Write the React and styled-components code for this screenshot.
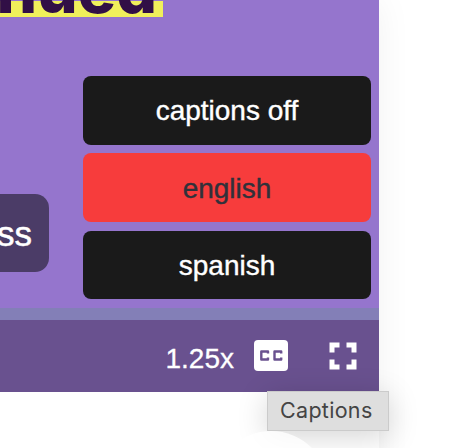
import React from 'react';
import styled, { createGlobalStyle } from 'styled-components';

const GlobalStyle = createGlobalStyle`
  * {
    box-sizing: border-box;
  }

  body {
    margin: 0;
    background: #fff;
    font-family: "Liberation Sans", Arial, sans-serif;
  }
`;

const Page = styled.div`
  position: relative;
  width: 466px;
  height: 448px;
  overflow: hidden;
`;

const Card = styled.div`
  width: 379px;
  height: 600px;
  background: #fff;
  box-shadow: 0 0 34px rgba(0, 0, 0, 0.06);
`;

const Player = styled.div`
  display: flex;
  flex-direction: column;
  height: 392px;
  overflow: hidden;
  background: #9575cd;
`;

const Title = styled.h1`
  width: 163px;
  height: 17px;
  margin: 0;
  padding: 0 6px 0 0;
  display: flex;
  align-items: flex-end;
  justify-content: flex-end;
  background: linear-gradient(#9575cd 1px, #f0f05b 1px);
  color: #310f46;
  font-family: Inter, sans-serif;
  font-size: 64px;
  font-weight: 800;
  line-height: 55px;
`;

const Stage = styled.div`
  flex: 1;
  display: flex;
  justify-content: space-between;
  padding: 59px 8px 0 0;
`;

const Subtitle = styled.div`
  display: flex;
  align-items: center;
  justify-content: flex-end;
  width: 49px;
  height: 78px;
  margin-top: 118px;
  padding: 2px 17px 0 0;
  border-radius: 0 14px 14px 0;
  background: #4b3c67;
  color: #fff;
  font-size: 35px;
  -webkit-text-stroke: 0.5px currentColor;
`;

const Menu = styled.div`
  display: flex;
  flex-direction: column;
  justify-content: space-between;
  width: 288px;
  height: 223px;
`;

const Option = styled.button`
  height: 69px;
  margin-top: ${props => (props.$active ? '-1px' : 0)};
  padding: ${props => (props.$active ? '2px 0 0' : 0)};
  border: 0;
  border-radius: 8px;
  background: ${props => (props.$active ? '#f73c3c' : '#1a1a1a')};
  color: ${props => (props.$active ? '#30313a' : '#fff')};
  font-family: inherit;
  font-size: 28px;
  -webkit-text-stroke: 0.4px currentColor;

  &:last-child {
    height: 68px;
    padding-top: 2px;
  }
`;

const Progress = styled.div`
  height: 12px;
  background: #837fb7;
`;

const Controls = styled.div`
  display: flex;
  align-items: center;
  justify-content: flex-end;
  height: 72px;
  padding-right: 22px;
  background: #69518f;
  color: #fff;
`;

const Speed = styled.span`
  margin: 5px 20px 0 0;
  font-size: 28px;
  line-height: 32px;
  -webkit-text-stroke: 0.3px currentColor;
`;

const Icon = styled.svg`
  display: block;
  margin: 0 ${props => props.$gap || 0}px 1px 0;
`;

const Tooltip = styled.div`
  position: absolute;
  z-index: 2;
  left: 267px;
  top: 391px;
  width: 122px;
  height: 40px;
  border: 1px solid #cbcbcb;
  background: #dedede;
  box-shadow: 0 6px 30px rgba(0, 0, 0, 0.17);
  color: #444;
  font-family: Inter, sans-serif;
  font-size: 21.5px;
  line-height: 37px;
  padding-left: 12px;
  letter-spacing: 0.3px;
`;

const RoundButton = styled.div`
  position: absolute;
  z-index: 3;
  left: 213px;
  top: 431px;
  width: 116px;
  height: 116px;
  border-radius: 50%;
  background: #fff;
  opacity: 0.8;
`;

const options = ['captions off', 'english', 'spanish'];

const App = () => (
  <Page>
    <GlobalStyle />
    <Card>
      <Player>
        <Title>Continued</Title>
        <Stage>
          <Subtitle>ss</Subtitle>
          <Menu>
            {options.map(name => (
              <Option key={name} $active={name === 'english'}>{name}</Option>
            ))}
          </Menu>
        </Stage>
        <Progress />
        <Controls>
          <Speed>1.25x</Speed>
          <Icon width="34" height="31" viewBox="0 0 34 31" $gap={41}>
            <rect width="34" height="31" rx="4" fill="#fff" />
            <path
              d="M14 13.500v-2H7.300v8H14v-2M27.200 13.500v-2h-6.700v8h6.700v-2"
              fill="none"
              stroke="#69518f"
              strokeWidth="2.4"
              strokeLinejoin="round"
            />
          </Icon>
          <Icon width="28" height="28" viewBox="0 0 28 28">
            <path
              d="M3 10.500V3H10.500M17.500 3H25V10.500M25 17.500V25h-7.500M10.500 25H3v-7.500"
              fill="none"
              stroke="#fff"
              strokeWidth="5"
            />
          </Icon>
        </Controls>
      </Player>
    </Card>
    <Tooltip>Captions</Tooltip>
    <RoundButton />
  </Page>
);

export default App;
